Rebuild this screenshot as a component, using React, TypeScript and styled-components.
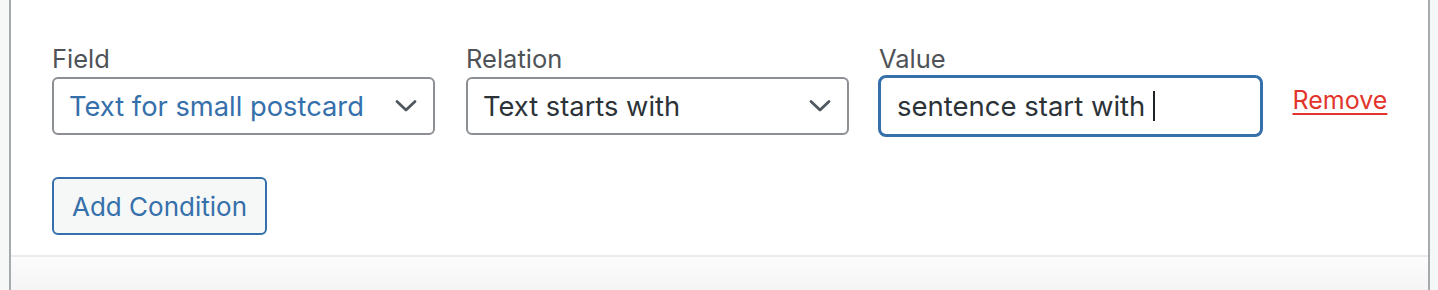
import React from 'react';
import styled, { createGlobalStyle } from 'styled-components';

const GlobalStyle = createGlobalStyle`
  html, body {
    margin: 0;
    padding: 0;
    height: 290px;
    overflow: hidden;
    background: #f6f7f7;
    font-family: Inter, "Noto Sans", "Liberation Sans", sans-serif;
  }
  #root {
    height: 100%;
  }
`;

const blue = '#3670ab';

const Page = styled.div`
  height: 290px;
  padding: 0 8px 0 9px;
  box-sizing: border-box;
  display: flex;
`;

const Panel = styled.section`
  flex: 1;
  display: flex;
  flex-direction: column;
  background: #fff;
  border-left: 2px solid #a7aaad;
  border-right: 2px solid #a7aaad;
`;

const Body = styled.div`
  flex: 0 0 255px;
  box-sizing: border-box;
  padding: 44px 0 0 41px;
`;

const Footer = styled.div`
  flex: 1;
  border-top: 2px solid #ebebeb;
  background: linear-gradient(#fcfcfc, #f5f5f5);
`;

const Row = styled.div`
  display: flex;
  align-items: flex-start;
  gap: 31.5px;
`;

const Column = styled.div<{ $focused?: boolean }>`
  display: flex;
  flex-direction: column;
  margin-left: ${(p) => (p.$focused ? '-2px' : '0')};
`;

const Label = styled.label<{ $focused?: boolean }>`
  font-size: 25.5px;
  line-height: 30px;
  color: #4f5357;
  margin-bottom: ${(p) => (p.$focused ? '1px' : '3px')};
  padding-left: ${(p) => (p.$focused ? '1px' : '0')};
`;

const SelectBox = styled.div<{ $accent?: boolean }>`
  width: 382.5px;
  height: 58px;
  box-sizing: border-box;
  border: 2px solid #8c8f94;
  border-radius: 6px;
  padding: 0 16px 0 15px;
  display: flex;
  align-items: center;
  justify-content: space-between;
  font-size: 27.3px;
  color: ${(p) => (p.$accent ? blue : '#2c3338')};
  background: #fff;
`;

const Chevron = () => (
  <svg width="22" height="14" viewBox="0 0 22 14" fill="none">
    <path d="M2 2.5 L11 11 L20 2.5" stroke="#50575e" strokeWidth="2.8" strokeLinecap="round" strokeLinejoin="round" />
  </svg>
);

const InputBox = styled.div`
  width: 385px;
  height: 62px;
  box-sizing: border-box;
  border: 3px solid ${blue};
  border-radius: 8px;
  padding: 0 16px;
  display: flex;
  align-items: center;
  font-size: 27.5px;
  color: #2c3338;
`;

const Caret = styled.span`
  display: inline-block;
  width: 2px;
  height: 30px;
  background: #1d2327;
  margin-left: 8px;
`;

const RemoveLink = styled.a`
  font-size: 25px;
  line-height: 30px;
  color: #e2352b;
  text-decoration: underline;
  text-underline-offset: 4px;
  text-decoration-thickness: 2px;
  margin: 41px 0 0 -2px;
`;

const AddButton = styled.button`
  display: block;
  margin-top: 40px;
  height: 58px;
  padding: 0 18px;
  border: 2px solid ${blue};
  border-radius: 6px;
  background: #f6f7f7;
  color: ${blue};
  font-family: inherit;
  font-size: 26px;
`;

export default function App(): JSX.Element {
  return (
    <>
      <GlobalStyle />
      <Page>
        <Panel>
          <Body>
            <Row>
              <Column>
                <Label>Field</Label>
                <SelectBox $accent>
                  Text for small postcard
                  <Chevron />
                </SelectBox>
              </Column>
              <Column>
                <Label>Relation</Label>
                <SelectBox>
                  Text starts with
                  <Chevron />
                </SelectBox>
              </Column>
              <Column $focused>
                <Label $focused>Value</Label>
                <InputBox>
                  sentence start with
                  <Caret />
                </InputBox>
              </Column>
              <RemoveLink>Remove</RemoveLink>
            </Row>
            <AddButton>Add Condition</AddButton>
          </Body>
          <Footer />
        </Panel>
      </Page>
    </>
  );
}
